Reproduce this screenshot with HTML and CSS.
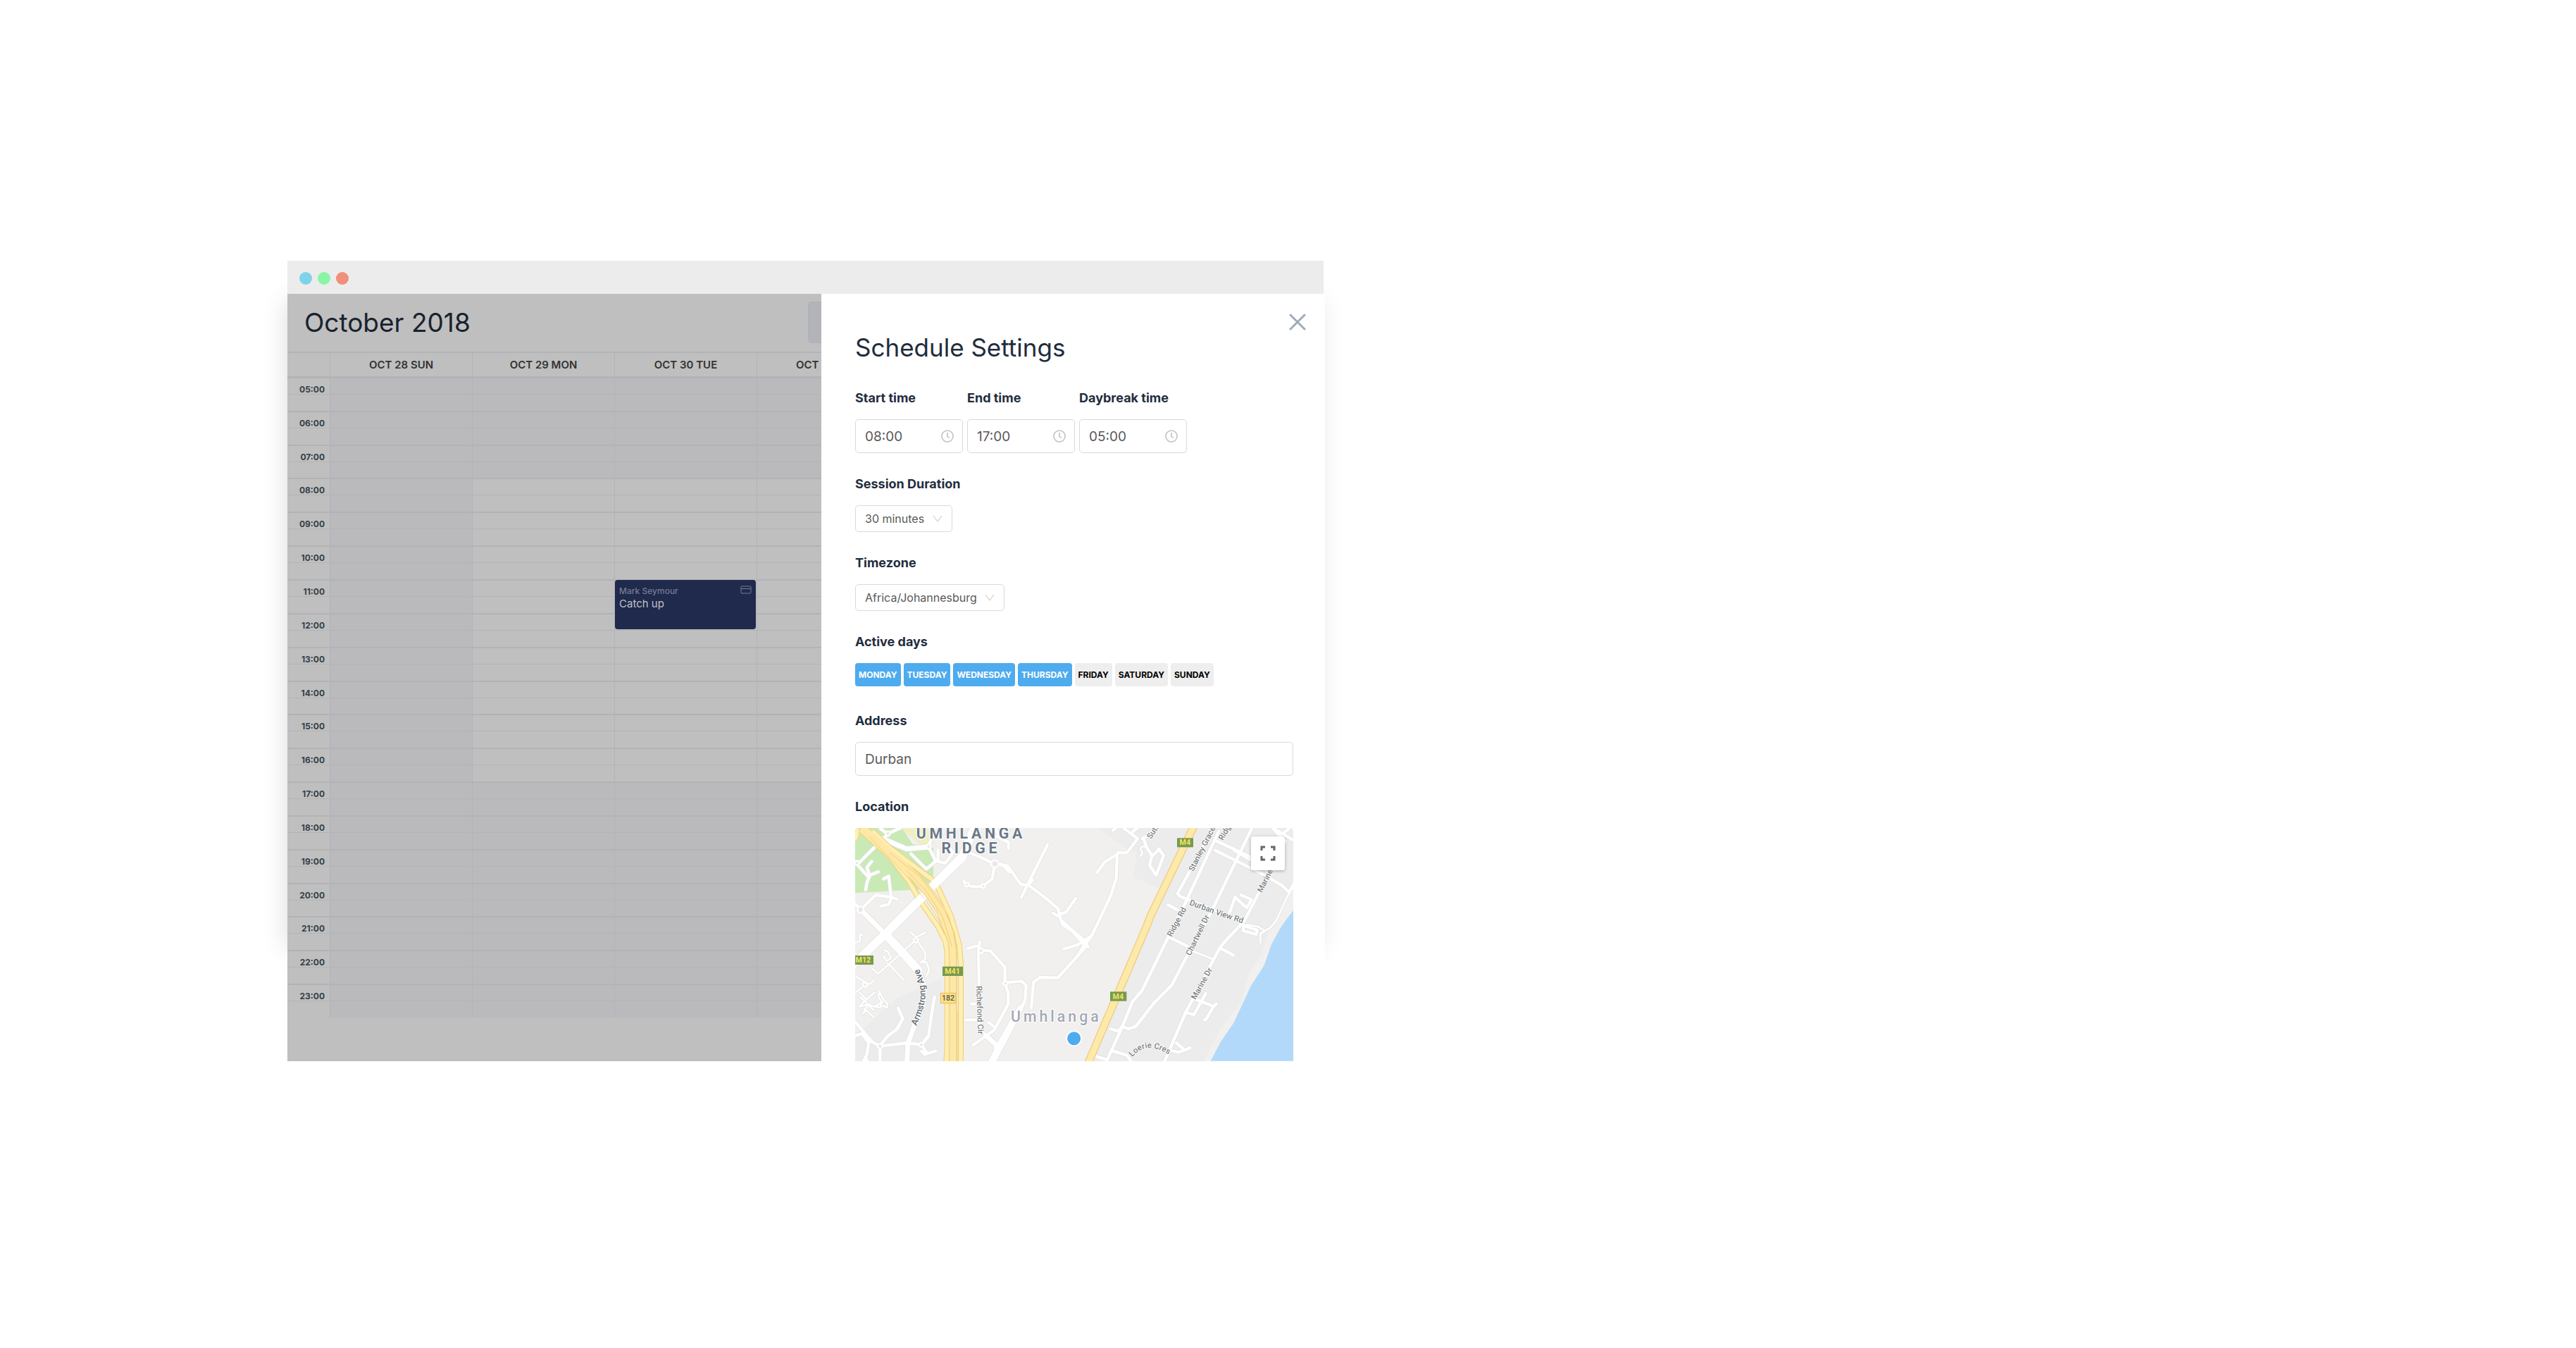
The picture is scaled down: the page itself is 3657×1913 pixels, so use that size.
FILE: index.html
```html
<!DOCTYPE html>
<html lang="en">
<head>
<meta charset="utf-8">
<meta name="viewport" content="width=device-width, initial-scale=1">
<title>Schedule Settings</title>
<link rel="stylesheet" href="styles.css">
</head>
<body>
<main class="window">
  <div class="titlebar">
    <span class="dot dot-blue"></span>
    <span class="dot dot-green"></span>
    <span class="dot dot-red"></span>
  </div>
  <div class="content">
    <section class="calendar">
      <header class="toolbar">
        <h1 class="title">October 2018</h1>
        <button class="toolbar-button" type="button" aria-label="Change week"></button>
      </header>
      <table class="week">
        <thead>
          <tr><td></td><th scope="col">OCT 28 SUN</th><th scope="col">OCT 29 MON</th><th scope="col">OCT 30 TUE</th><th scope="col">OCT 31 WED</th></tr>
        </thead>
        <tbody>
          <tr class="closed"><th scope="row">05:00</th><td></td><td></td><td></td><td></td></tr>
          <tr class="closed"><th scope="row">06:00</th><td></td><td></td><td></td><td></td></tr>
          <tr class="closed"><th scope="row">07:00</th><td></td><td></td><td></td><td></td></tr>
          <tr><th scope="row">08:00</th><td class="off"></td><td></td><td></td><td></td></tr>
          <tr><th scope="row">09:00</th><td class="off"></td><td></td><td></td><td></td></tr>
          <tr><th scope="row">10:00</th><td class="off"></td><td></td><td></td><td></td></tr>
          <tr><th scope="row">11:00</th><td class="off"></td><td></td><td class="booked">
            <article class="event">
              <div class="event-head">
                <span class="event-who">Mark Seymour</span>
                <svg class="event-icon" viewBox="0 0 16 12" aria-hidden="true"><rect x="1" y="1" width="14" height="10" rx="1"/><path d="M1 4.5h14"/></svg>
              </div>
              <p class="event-what">Catch up</p>
            </article>
          </td><td></td></tr>
          <tr><th scope="row">12:00</th><td class="off"></td><td></td><td></td><td></td></tr>
          <tr><th scope="row">13:00</th><td class="off"></td><td></td><td></td><td></td></tr>
          <tr><th scope="row">14:00</th><td class="off"></td><td></td><td></td><td></td></tr>
          <tr><th scope="row">15:00</th><td class="off"></td><td></td><td></td><td></td></tr>
          <tr><th scope="row">16:00</th><td class="off"></td><td></td><td></td><td></td></tr>
          <tr class="closed"><th scope="row">17:00</th><td></td><td></td><td></td><td></td></tr>
          <tr class="closed"><th scope="row">18:00</th><td></td><td></td><td></td><td></td></tr>
          <tr class="closed"><th scope="row">19:00</th><td></td><td></td><td></td><td></td></tr>
          <tr class="closed"><th scope="row">20:00</th><td></td><td></td><td></td><td></td></tr>
          <tr class="closed"><th scope="row">21:00</th><td></td><td></td><td></td><td></td></tr>
          <tr class="closed"><th scope="row">22:00</th><td></td><td></td><td></td><td></td></tr>
          <tr class="closed"><th scope="row">23:00</th><td></td><td></td><td></td><td></td></tr>
        </tbody>
      </table>
    </section>

    <form class="panel">
      <button class="close" type="button" aria-label="Close">
        <svg viewBox="0 0 24 24" aria-hidden="true"><path d="M2 2l20 20M22 2L2 22"/></svg>
      </button>
      <h2 class="title panel-title">Schedule Settings</h2>

      <div class="times">
        <div class="field">
          <label for="start">Start time</label>
          <div class="control">
            <input id="start" class="box" type="text" value="08:00">
            <svg class="clock" viewBox="0 0 18 18" aria-hidden="true"><circle cx="9" cy="9" r="8"/><path d="M9 4v5.500l3 2"/></svg>
          </div>
        </div>
        <div class="field">
          <label for="end">End time</label>
          <div class="control">
            <input id="end" class="box" type="text" value="17:00">
            <svg class="clock" viewBox="0 0 18 18" aria-hidden="true"><circle cx="9" cy="9" r="8"/><path d="M9 4v5.500l3 2"/></svg>
          </div>
        </div>
        <div class="field">
          <label for="daybreak">Daybreak time</label>
          <div class="control">
            <input id="daybreak" class="box" type="text" value="05:00">
            <svg class="clock" viewBox="0 0 18 18" aria-hidden="true"><circle cx="9" cy="9" r="8"/><path d="M9 4v5.500l3 2"/></svg>
          </div>
        </div>
      </div>

      <div class="field">
        <label for="duration">Session Duration</label>
        <div class="control">
          <select id="duration" class="box"><option>30 minutes</option></select>
          <svg class="chevron" viewBox="0 0 14 10" aria-hidden="true"><path d="M1 1l6 8 6-8"/></svg>
        </div>
      </div>

      <div class="field">
        <label for="timezone">Timezone</label>
        <div class="control">
          <select id="timezone" class="box"><option>Africa/Johannesburg</option></select>
          <svg class="chevron" viewBox="0 0 14 10" aria-hidden="true"><path d="M1 1l6 8 6-8"/></svg>
        </div>
      </div>

      <div class="field" role="group" aria-labelledby="days">
        <span class="label" id="days">Active days</span>
        <div class="days">
          <button class="day" type="button" aria-pressed="true">MONDAY</button>
          <button class="day" type="button" aria-pressed="true">TUESDAY</button>
          <button class="day" type="button" aria-pressed="true">WEDNESDAY</button>
          <button class="day" type="button" aria-pressed="true">THURSDAY</button>
          <button class="day" type="button" aria-pressed="false">FRIDAY</button>
          <button class="day" type="button" aria-pressed="false">SATURDAY</button>
          <button class="day" type="button" aria-pressed="false">SUNDAY</button>
        </div>
      </div>

      <div class="field">
        <label for="address">Address</label>
        <input id="address" class="box" type="text" value="Durban">
      </div>

      <div class="field">
        <span class="label">Location</span>
        <div class="map">
          <svg class="map-art" viewBox="42 45 1866 993" role="img" aria-label="Map of Umhlanga">
            <defs>
              <g id="minor">
                <g class="w6">
                  <path d="M42 535l20-10 0-25 12 0M42 675l40 25 22 10 20-18M86 712l-30 24-14 10M110 640l30 25 55-48 60-52M180 620l68 70M165 565l18 8 12 28-20 10-12-20M275 487l26 22 42-19M301 522l-60 50M305 525l18 25 16 24 2 30-20 12 25 0 12 35-15 28M60 745l30 30 35-30M90 775l-30 30 45-10M65 765l55 55M80 820l18-20 50 10 8-25-15-20 5-25 12 30 20 20 0 20-25-10M75 835l15-15 30 30M160 785l-35 20"/>
                  <path d="M1280 125q-18-8-22 10l8 20-10 10M1482 570l84 34M1768 535v-40l24-15 18-10 28-34 42-95 28-44M1782 480l-22-14-50-10"/>
                </g>
                <g class="w12">
                  <path d="M42 195l15 0 75-75M55 205l40 45 45-18M112 188l-20 25 12 35-12 30-5 30M163 262l22-12 10 90 25 8M195 340l-65-10-62 60M130 330l-12 12M150 378l35-8 12-28M42 368l25 24 25 22"/>
                  <path d="M150 48l30 22 55-25M180 70l-15 20M280 155l65 65 50-42 0-40M355 125l30 60 40 10 35-45-25-30M380 45l-25 80"/>
                  <path d="M505 272q20 32 82 20l38-30 12-62M525 150l40 15 72 32 55 10 55 78 35 5 80 60 45 40 10 45 100 90M665 198l35 35M862 115l-80 160-32 65M782 285l16-18M912 412l28-8 42-60M885 408l30 18 10 30 40 28 55 60M932 560l60-18 60-40M1015 540l20 12M1030 545l-125 138-75-2-28 20-10 112"/>
                  <path d="M572 530l-5 40 3 150M522 558l35-10M578 566l40 2 62 70 0 66 70-7 20 18-4 62-40 90-90 170M680 704l14 45 0 46-60 110-90 65M570 720v170l20 30 60 50M512 862h55M535 794h30M610 873l25 20M640 975l0 40"/>
                  <path d="M380 765l-12 70-14 100-30 34M225 812l20 45-22 42-40 30-35 42M245 857l-30 50M42 870l70 84 35 20 115-14 65 8 18-30M42 930l28-10 30 40-8 50-14 28M148 975v63M95 1038l-10-18M325 970l25 35 35-10M340 1010l-15-15"/>
                  <path d="M640 45l20 45 35 15 0 30M600 45l20 30 40 10"/>
                </g>
                <g class="w12" transform="translate(990 0)">
                  <path d="M82 235l32-44 60-38M168 155l-4 105-24 75-76 160-26 40M170 150l40 0 45-60-60-45M150 55l20-15M235 60l25-20M275 90l28-14 30-35M280 92l16 40 20 30-10 42 28 42 32-84-22-28M316 165l32-30M0 500l35 30-35 60"/>
                  <path d="M425 325l50-92 100-188M425 325l12 12 30 12 45 16 185 78M600 60l-135 290-75 150-115 235-42 50-45 110-65 143M590 100l150 70-4 10-70-40M585 140l200 100 85 50 30 28 20-36M742 45L555 430 460 600l-60 115-75 75-78 100-30 10-30-10M385 372l40 22M390 510l80 40M885 100l-175 340-80 85-25 30-145 275-90 208M605 555l58 32M645 410l25-70 50 45 20-35-45-20M830 45l30 35 40-32M840 50l75 45M705 460l60 20-5 18-55-15zM490 770l90 35 10-12M545 750l-50 90-38-10M575 810l-25 45-10 8M140 900l32 10 14-14M80 1018l40 12M150 995l60 18 25 35M385 990l45 10 40-15 8-4M420 960l30 26"/>
                </g>
                <g class="w22">
                  <path d="M155 90l55 22 50 22 90-8"/>
                  <path d="M65 393l105 104"/>
                  <path d="M310 650l28 70-8 80-35 85-28 75-4 78"/>
                  <path d="M650 980l-30 58M745 810l-95 165-50-45"/>
                </g>
                <g class="w36">
                  <path d="M30 630l140-133 205-205M375 290l125-125 50-120M170 497l80 85 60 68"/>
                </g>
              </g>
              <g id="circles">
                <circle cx="181" cy="69" r="10"/><circle cx="354" cy="124" r="9"/><circle cx="637" cy="198" r="15"/><circle cx="65" cy="393" r="13"/>
                <circle cx="301" cy="523" r="9"/><circle cx="578" cy="568" r="10"/><circle cx="682" cy="706" r="9"/><circle cx="148" cy="974" r="10"/>
                <circle cx="324" cy="968" r="9"/><circle cx="84" cy="712" r="9"/><circle cx="50" cy="194" r="9"/><circle cx="518" cy="286" r="8"/><circle cx="588" cy="292" r="8"/>
              </g>
              <path id="armstrong" d="M303 888C345 790 365 730 295 610"/>
              <path id="durbanview" d="M1464 372C1540 398 1600 425 1710 456"/>
              <path id="loerie" d="M1222 1020C1260 975 1310 965 1385 1014"/>
            </defs>

            <rect class="land" x="42" y="45" width="1866" height="993"/>
            <path class="urban" d="M42 930L220 770 415 685 430 1038H42z"/>
            <path class="urban" d="M1080 45l110 85 50 20-12 105 118 50-50 130-170 400-110 203h512l70-140 90-115 25-105 60-95 35-110 60-120 40-90V45z"/>
            <path class="park" d="M42 45h200l45 70 88 15v140l-60 37L42 322z"/>
            <path class="sand" d="M240 45h110l30 60-60 15z"/>
            <path class="sea" d="M1908 395l-50 68-42 75-32 92-55 85-75 160-54 78-44 84h352z"/>

            <use href="#minor" class="edge"/>
            <use href="#minor" class="fill"/>
            <use href="#circles" class="circle"/>

            <g class="highway-edge">
              <path class="lane" d="M75 45L180 155 270 270 315 350 395 465 425 525 434 570V990L430 1040M115 58L190 130 290 205 370 265 395 300 450 420 485 540 492 620V1040M40 95Q54 75 48 45"/>
              <path class="core" d="M70 45L180 145 300 255 360 325 410 400 440 490 455 570V1040"/>
            </g>
            <g class="highway-light">
              <path class="lane" d="M75 45L180 155 270 270 315 350 395 465 425 525 434 570V990L430 1040M115 58L190 130 290 205 370 265 395 300 450 420 485 540 492 620V1040M40 95Q54 75 48 45"/>
            </g>
            <g class="highway-fill">
              <path class="core" d="M70 45L180 145 300 255 360 325 410 400 440 490 455 570V1040"/>
              <path class="seam" d="M100 80L200 185 270 262 345 355 400 440 440 530 444 600V1038M190 150L320 255 370 320 425 400 465 490 474 560V1038M480 830V1038M260 225L350 320 415 425 455 550"/>
            </g>
            <path class="over" d="M372 292L505 165M175 492L330 338"/>

            <path class="m4-edge" d="M1484 38L1300 420 1285 460 1035 1045"/>
            <path class="m4" d="M1484 38L1300 420 1285 460 1035 1045"/>

            <g class="shield">
              <rect x="42" y="588" width="78" height="39"/><rect x="414" y="635" width="87" height="40"/>
              <rect x="1413" y="88" width="69" height="39"/><rect x="1128" y="742" width="70" height="40"/>
              <text x="76" y="619">M12</text><text x="456" y="666">M41</text><text x="1447" y="118">M4</text><text x="1162" y="773">M4</text>
            </g>
            <rect class="route" x="406" y="748" width="64" height="43"/>
            <text class="route-text" x="438" y="781">182</text>

            <g class="district">
              <text x="535" y="90">UMHLANGA</text>
              <text x="535" y="154">RIDGE</text>
            </g>
            <text class="suburb" x="898" y="870">Umhlanga</text>

            <g class="street">
              <text class="street-big"><textPath href="#armstrong">Armstrong Ave</textPath></text>
              <text><textPath href="#durbanview">Durban View Rd</textPath></text>
              <text><textPath href="#loerie">Loerie Cres</textPath></text>
              <text transform="translate(558 718) rotate(88)">Richefond Cir</text>
              <text transform="translate(1482 232) rotate(-63)">Stanley Grace</text>
              <text transform="translate(1608 100) rotate(-60)">Ridge Rd</text>
              <text transform="translate(1302 94) rotate(-57)">Sutton</text>
              <text transform="translate(1390 510) rotate(-62)">Ridge Rd</text>
              <text transform="translate(1470 590) rotate(-64)">Chartwell Dr</text>
              <text transform="translate(1492 778) rotate(-61)">Marine Dr</text>
              <text transform="translate(1774 322) rotate(-63)">Marine Dr</text>
            </g>
            <circle class="pin" cx="974" cy="941" r="31"/>
          </svg>
          <button class="expand" type="button" aria-label="Toggle full screen">
            <svg viewBox="0 0 22 22" aria-hidden="true"><path d="M2 7V2h5M15 2h5v5M20 15v5h-5M7 20H2v-5"/></svg>
          </button>
        </div>
      </div>
    </form>
  </div>
</main>
</body>
</html>
```
FILE: styles.css
```css
* { box-sizing: border-box; }

body {
  margin: 0;
  padding: 370px 24px 370px 408px;
  background: #fff;
  color: #1f2d3d;
  font-family: Inter, "Liberation Sans", sans-serif;
}

h1, h2, p { margin: 0; }
button, input, select { font: inherit; }
button { border: 0; padding: 0; cursor: pointer; }

.window {
  position: relative;
  z-index: 0;
  width: 100%;
  max-width: 1473px;
}
.window::before {
  content: "";
  position: absolute;
  z-index: -1;
  inset: 56px 12px 160px 2px;
  box-shadow: 0 0 36px rgba(0, 0, 0, .16);
}

.titlebar {
  display: flex;
  align-items: center;
  gap: 8px;
  height: 47px;
  margin-right: 2px;
  padding: 3px 17px 0;
  background: #ececec;
}
.dot { width: 18px; height: 18px; border-radius: 50%; }
.dot-blue { background: #7fd3e8; }
.dot-green { background: #8af5a6; }
.dot-red { background: #f0907a; }

.content {
  display: grid;
  grid-template-columns: minmax(0, 1fr) minmax(0, 715px);
}

/* Calendar, dimmed behind the open panel */
.calendar {
  overflow: hidden;
  background: #bfbfbf;
}
.toolbar {
  display: flex;
  align-items: center;
  justify-content: space-between;
  width: 868px;
  padding: 11px 0 12px 24px;
  border-bottom: 2px solid #b3b4b8;
}
.title {
  font-size: 37px;
  line-height: 48px;
  font-weight: 400;
}
.calendar .title { color: #18222e; }
.toolbar-button {
  width: 129px;
  height: 59px;
  border: 1px solid #b0b1b8;
  border-radius: 5px;
  background: #b3b4b9;
}

.week {
  width: 868px;
  height: 943px;
  table-layout: fixed;
  border-spacing: 0;
}
.week th, .week td { padding: 0; }
.week thead tr > * {
  height: 36px;
  border-bottom: 3px solid #b2b3b9;
  border-left: 1px solid #b2b3b8;
  color: #333;
  font-size: 15px;
  line-height: 20px;
  font-weight: 600;
}
.week thead tr > :first-child { width: 60px; border-left: 0; }
.week tbody tr > * {
  height: 47px;
  border-top: 2px solid #b2b3b8;
  border-left: 1px solid #b2b3b8;
  background: linear-gradient(#b3b4b8, #b3b4b8) 0 22px / 100% 1px no-repeat;
}
.week tbody tr:first-child > * { height: 45px; border-top: 0; }
.week tbody th {
  padding: 8px 7px 0 0;
  border-left: 0;
  color: #343e49;
  font-size: 12px;
  line-height: 16px;
  text-align: right;
  vertical-align: top;
}
.week .closed td, .week .off { background-color: #bababc; }
.booked { position: relative; }

.event {
  position: absolute;
  top: -1px;
  left: 0;
  right: 1px;
  height: 70px;
  padding: 8px 6px;
  border-radius: 4px;
  background: #1f2a4d;
  color: #bfc1c8;
}
.event-head {
  display: flex;
  justify-content: space-between;
  line-height: 16px;
}
.event-who { color: #757b91; font-size: 12px; font-weight: 500; }
.event-icon {
  width: 16px;
  height: 12px;
  fill: none;
  stroke: #757b91;
}
.event-what { font-size: 15px; line-height: 20px; }

/* Settings panel */
.panel {
  position: relative;
  display: flex;
  flex-direction: column;
  gap: 32px;
  padding: 52px 45px 0 48px;
  background: #fff;
}
.panel-title { margin-bottom: 4px; font-size: 35px; }
.close {
  position: absolute;
  top: 28px;
  right: 27px;
  width: 24px;
  height: 24px;
  background: none;
}
.close svg {
  display: block;
  fill: none;
  stroke: #9fabb8;
  stroke-width: 3;
  stroke-linecap: round;
}

.times {
  display: grid;
  grid-template-columns: repeat(3, 153px);
  gap: 6px;
}
.field {
  display: flex;
  flex-direction: column;
  align-items: flex-start;
  gap: 18px;
}
label, .label {
  font-size: 18px;
  line-height: 24px;
  font-weight: 700;
}
.control { position: relative; max-width: 100%; }
.box {
  display: block;
  width: 100%;
  height: 48px;
  padding: 0 13px;
  border: 1px solid #d9d9d9;
  border-radius: 5px;
  background: #fff;
  color: #595959;
  font-size: 19px;
}
select.box {
  width: auto;
  height: 38px;
  padding-right: 38px;
  appearance: none;
  font-size: 16px;
}
.clock, .chevron {
  position: absolute;
  fill: none;
  stroke: #bfbfbf;
  pointer-events: none;
}
.clock { top: 15px; right: 13px; width: 18px; height: 18px; stroke-width: 1.5; }
.chevron { top: 14px; right: 14px; width: 14px; height: 10px; }

.days {
  display: flex;
  flex-wrap: wrap;
  gap: 4px;
  margin-bottom: 5px;
}
.day {
  height: 33px;
  padding: 0 5px;
  border-radius: 4px;
  background: #eee;
  color: #000;
  font-size: 12px;
  font-weight: 700;
}
.day[aria-pressed="true"] { background: #4dabee; color: #fff; }

/* Map */
.map {
  position: relative;
  width: 100%;
  overflow: hidden;
  border-radius: 5px 5px 0 0;
}
.map-art { display: block; width: 100%; font-family: Roboto, sans-serif; }
.expand {
  position: absolute;
  top: 12px;
  right: 12px;
  display: grid;
  place-items: center;
  width: 48px;
  height: 48px;
  border-radius: 3px;
  background: #fff;
  box-shadow: 0 1px 4px rgba(0, 0, 0, .3);
}
.expand svg { width: 22px; height: 22px; fill: none; stroke: #666; stroke-width: 3; }

.land { fill: #f1f0ee; }
.urban { fill: #ececec; }
.park { fill: #c9eab4; }
.sand { fill: #eef0c4; }
.sea { fill: #b2d9fa; }

.edge { --edge: 4px; stroke: #dfe0e1; }
.fill { --edge: 0px; stroke: #fff; }
.w6, .w12, .w22, .w36 { fill: none; stroke-linecap: round; stroke-linejoin: round; }
.w6 { stroke-width: calc(8px + var(--edge)); }
.w12 { stroke-width: calc(13px + var(--edge)); }
.w22 { stroke-width: calc(21px + var(--edge)); }
.w36 { stroke-width: calc(36px + var(--edge)); }
.circle { fill: #e8e8e8; stroke: #fff; stroke-width: 7; }

.lane, .core, .seam, .over, .m4, .m4-edge { fill: none; stroke-linejoin: round; }
.highway-edge { stroke: #f2cf7c; }
.highway-edge .lane { stroke-width: 24px; }
.highway-edge .core { stroke-width: 42px; }
.highway-light { stroke: #feefb3; }
.highway-light .lane { stroke-width: 17px; }
.highway-fill { stroke: #fde8a7; }
.highway-fill .core { stroke-width: 36px; }
.highway-fill .seam { stroke: #efce79; stroke-width: 3px; }
.over { stroke: #fff; stroke-width: 34px; }
.m4-edge { stroke: #efca78; stroke-width: 34px; }
.m4 { stroke: #fde9a9; stroke-width: 27px; }

.shield { fill: #759b50; }
.shield text { fill: #fbe05e; font-size: 32px; font-weight: 700; text-anchor: middle; }
.route { fill: #fbe081; stroke: #e5bd58; stroke-width: 3; }
.route-text { fill: #555; font-size: 32px; font-weight: 500; text-anchor: middle; }

.district, .suburb, .street {
  stroke: #fff;
  stroke-width: 7px;
  stroke-linejoin: round;
  paint-order: stroke;
}
.district {
  fill: #6b7988;
  font-size: 64px;
  font-weight: 700;
  letter-spacing: 14px;
  text-anchor: middle;
}
.suburb {
  fill: #a3a8b3;
  font-size: 64px;
  font-weight: 500;
  letter-spacing: 12px;
  text-anchor: middle;
}
.street { fill: #7b7f84; font-size: 34px; font-weight: 500; stroke-width: 5px; }
.street-big { fill: #62686d; font-size: 38px; }
.pin { fill: #4dabee; stroke: #fff; stroke-width: 5; }
```
